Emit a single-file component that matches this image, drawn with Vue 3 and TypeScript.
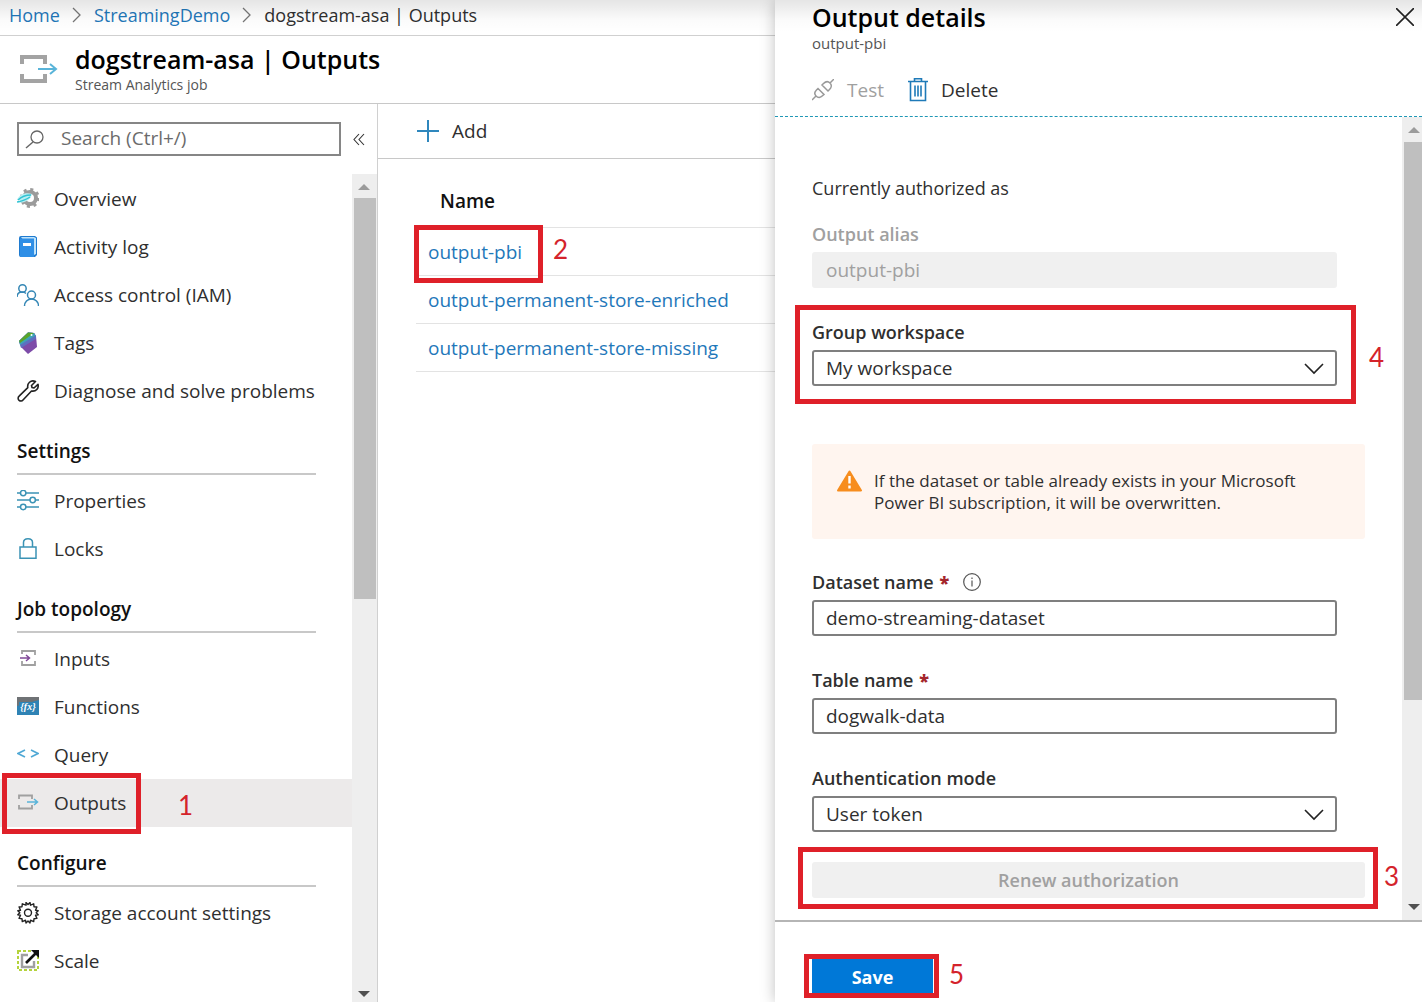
<script setup lang="ts">
import { ref } from 'vue'

interface MenuItem {
  icon: string
  label: string
}
interface MenuGroup {
  title: string
  items: MenuItem[]
}

const groups: MenuGroup[] = [
  {
    title: '',
    items: [
      { icon: 'overview', label: 'Overview' },
      { icon: 'log', label: 'Activity log' },
      { icon: 'people', label: 'Access control (IAM)' },
      { icon: 'tags', label: 'Tags' },
      { icon: 'wrench', label: 'Diagnose and solve problems' },
    ],
  },
  {
    title: 'Settings',
    items: [
      { icon: 'sliders', label: 'Properties' },
      { icon: 'lock', label: 'Locks' },
    ],
  },
  {
    title: 'Job topology',
    items: [
      { icon: 'inputs', label: 'Inputs' },
      { icon: 'functions', label: 'Functions' },
      { icon: 'query', label: 'Query' },
      { icon: 'outputs', label: 'Outputs' },
    ],
  },
  {
    title: 'Configure',
    items: [
      { icon: 'gear', label: 'Storage account settings' },
      { icon: 'scale', label: 'Scale' },
    ],
  },
]

const outputs = ['output-pbi', 'output-permanent-store-enriched', 'output-permanent-store-missing']

const selected = ref('Outputs')
const search = ref('')
const alias = ref('output-pbi')
const workspace = ref('My workspace')
const dataset = ref('demo-streaming-dataset')
const table = ref('dogwalk-data')
const authMode = ref('User token')
</script>

<template>
  <div class="portal">
    <main class="blade">
      <nav class="crumbs" aria-label="Breadcrumb">
        <a href="#">Home</a>
        <svg width="10" height="16" viewBox="0 0 10 16"><path d="M1 1l7 7-7 7" /></svg>
        <a href="#">StreamingDemo</a>
        <svg width="10" height="16" viewBox="0 0 10 16"><path d="M1 1l7 7-7 7" /></svg>
        <span>dogstream-asa | Outputs</span>
      </nav>

      <header class="blade-head">
        <svg width="38" height="30" viewBox="0 0 38 30" fill="none">
          <path d="M2 10V3h23v7M2 20v7h23v-7" stroke="#a3a3a3" stroke-width="4" />
          <path d="M18 15h18M30 10l6 5-6 5" stroke="#59b4d9" stroke-width="2" />
        </svg>
        <div>
          <h1>dogstream-asa | Outputs</h1>
          <p>Stream Analytics job</p>
        </div>
      </header>

      <div class="blade-body">
        <aside class="side">
          <div class="search-row">
            <label class="search">
              <svg width="20" height="20" viewBox="0 0 20 20" fill="none" stroke="#666">
                <circle cx="12" cy="8" r="6" stroke-width="1.3" />
                <path d="M8 13l-7 6" stroke-width="1.5" />
              </svg>
              <input v-model="search" type="text" placeholder="Search (Ctrl+/)" aria-label="Search (Ctrl+/)" />
            </label>
            <button class="collapse" type="button" aria-label="Collapse menu">
              <svg width="14" height="14" viewBox="0 0 14 14" fill="none" stroke="#333" stroke-width="1.1">
                <path d="M7 2L2 7.500l5 5.500M12 2L7 7.500l5 5.500" />
              </svg>
            </button>
          </div>

          <div class="side-body">
            <div class="menu">
              <section v-for="group in groups" :key="group.title">
                <h2 v-if="group.title">{{ group.title }}</h2>
                <ul>
                  <li v-for="item in group.items" :key="item.label" :class="{ active: item.label === selected }">
                    <a href="#" @click.prevent="selected = item.label">
                      <svg width="22" height="22" viewBox="0 0 22 22" fill="none">
                        <g v-if="item.icon === 'overview'">
                          <circle cx="13" cy="10" r="6" stroke="#9b9b9b" stroke-width="4" />
                          <circle cx="13" cy="10" r="8.5" stroke="#9b9b9b" stroke-width="3" stroke-dasharray="3 3.67" />
                          <path d="M0 12c2-5 8-8 15-6-1 6-7 9-15 9 2-1 3-2 3-3z" fill="#b9eef2" />
                          <path d="M1 12c4-4 8-5 13-5M0 14c5-1 9-2 13-5" stroke="#32c3d3" stroke-width="1.4" />
                        </g>
                        <g v-else-if="item.icon === 'log'">
                          <path d="M4 0h14l2 1.500V19l-2 2H4a2 2 0 0 1-2-2V2a2 2 0 0 1 2-2z" fill="#1f7bd0" />
                          <path d="M4 1h13l2 1v16l-2 1z" fill="#bfe3fb" />
                          <path d="M3 2.500h14V21H4l-1-1z" fill="#2f8fe6" />
                          <path d="M6 7h8v3H6z" fill="#fff" />
                        </g>
                        <g v-else-if="item.icon === 'people'" stroke="#3587b5" stroke-width="1.500">
                          <circle cx="5.500" cy="4.500" r="3.700" />
                          <path d="M0 13c0-3 2-5 5.500-5 1.500 0 2.500.5 3.500 1.500" />
                          <circle cx="14.500" cy="11" r="4" />
                          <path d="M7.500 22c0-4 3-7 7-7s7 3 7 7" />
                        </g>
                        <g v-else-if="item.icon === 'tags'">
                          <path d="M2 9l9-8.500 6 .5 2 3 1 11-9 7-7-7z" fill="#7d4ba8" />
                          <path d="M2 9l9-8.500 6 .5 2 3-.2 3L4 16z" fill="#5d6fc0" />
                          <path d="M2 9l9-8.500 6 .5 1.500 2.500L3 13z" fill="#3da3b8" />
                          <path d="M2 9l9-8.500 6 .5L3 11z" fill="#5aa52a" />
                          <circle cx="14.500" cy="3" r="1" fill="#fff" />
                        </g>
                        <g v-else-if="item.icon === 'wrench'" stroke="#222" stroke-width="1.600" stroke-linejoin="round">
                          <path d="M18.500 1.500l-4 4 .5 2 2 .5 4-3.700c1 4-2 7.500-6.500 6.700L6 20c-1 1.200-2.700 1.300-3.900.3-1.300-1.200-1.300-3 0-4.200l8.700-8.500C10 3.500 13.500-.5 18.500 1.500z" />
                        </g>
                        <g v-else-if="item.icon === 'sliders'" stroke="#3b93b5" stroke-width="1.500">
                          <path d="M0 3h3.500M9 3h13M0 10h13M18.500 10H22M0 17h3.500M9 17h13" />
                          <circle cx="6.200" cy="3" r="2.700" />
                          <circle cx="15.700" cy="10" r="2.700" />
                          <circle cx="6.200" cy="17" r="2.700" />
                        </g>
                        <g v-else-if="item.icon === 'lock'" stroke="#3b93b5" stroke-width="1.500">
                          <path d="M3 9h16v11.200H3zM6.500 9V4.500c0-5 9-5 9 0V9" />
                        </g>
                        <g v-else-if="item.icon === 'inputs'">
                          <path d="M5 6V3h13v4M5 13v4h13v-4" stroke="#a0a0a0" stroke-width="1.800" />
                          <path d="M3 10h9M9 7l3.500 3L9 13" stroke="#804998" stroke-width="1.500" />
                        </g>
                        <g v-else-if="item.icon === 'functions'">
                          <path d="M0 1h22v18H0z" fill="#2f83b5" />
                          <path d="M0 1h22v3L0 10z" fill="#6f7275" />
                          <path d="M2 6h18v10H2z" fill="#2f83b5" />
                          <text x="11" y="14" text-anchor="middle" class="fx">{fx}</text>
                        </g>
                        <g v-else-if="item.icon === 'query'" stroke="#4fa8d5" stroke-width="1.600">
                          <path d="M8 6L1 9.500 8 13M14 6l7 3.500-7 3.500" />
                        </g>
                        <g v-else-if="item.icon === 'outputs'">
                          <path d="M2 7V3.500h13V7M2 13v3.500h13V13" stroke="#a0a0a0" stroke-width="1.800" />
                          <path d="M10 10h10M17 7l3.500 3-3.500 3" stroke="#59b4d9" stroke-width="1.500" />
                        </g>
                        <g v-else-if="item.icon === 'gear'" stroke="#222" stroke-width="1.400" stroke-linejoin="round">
                          <path d="M9 3.200L9 .5 11 2.500 13 .5l.5 2.700 3.200-1.400.3 2.900 2.900.3-1.400 3.200 2.700.5-2 2 2 2-2.700.5 1.400 3.200-2.900.3-.3 2.900-3.200-1.400L13 21l-2-2-2 2-.5-2.800-3.200 1.400-.3-2.900-2.900-.3 1.400-3.200L.8 12.700l2-2-2-2 2.700-.5L2.100 5 5 4.700l.3-2.900z" />
                          <circle cx="11" cy="10.700" r="3.500" />
                        </g>
                        <g v-else>
                          <path d="M1 1h20v19H1z" stroke="#b4d33c" stroke-width="2" stroke-dasharray="3 2" />
                          <path d="M11 5H5v12h12v-6" stroke="#a0a0a0" stroke-width="2.400" />
                          <path d="M14 0h8v8z" fill="#111" />
                          <path d="M9 13L19 3" stroke="#111" stroke-width="2.600" />
                        </g>
                      </svg>
                      {{ item.label }}
                    </a>
                    <span v-if="item.label === 'Outputs'" class="mark mark-1" />
                    <span v-if="item.label === 'Outputs'" class="step step-1">1</span>
                  </li>
                </ul>
              </section>
            </div>
            <div class="bar">
              <svg width="24" height="24" viewBox="0 0 24 24"><path d="M6 16h12l-6-6z" fill="#9b9b9b" /></svg>
              <i class="thumb thumb-menu" />
              <i class="track-menu" />
              <svg width="24" height="18" viewBox="0 0 24 18"><path d="M6 7h12l-6 6z" fill="#505050" /></svg>
            </div>
          </div>
        </aside>

        <section class="content">
          <div class="tools">
            <button class="tool" type="button">
              <svg width="22" height="22" viewBox="0 0 22 22"><path d="M0 11h22M11 0v22" stroke="#2f87bd" stroke-width="2" /></svg>
              Add
            </button>
          </div>
          <table class="grid">
            <thead>
              <tr><th scope="col">Name</th></tr>
            </thead>
            <tbody>
              <tr v-for="(name, i) in outputs" :key="name">
                <td>
                  <a href="#">{{ name }}</a>
                  <span v-if="i === 0" class="mark mark-2" />
                  <span v-if="i === 0" class="step step-2">2</span>
                </td>
              </tr>
            </tbody>
          </table>
        </section>
      </div>
    </main>

    <aside class="panel">
      <header class="panel-head">
        <div>
          <h2>Output details</h2>
          <p>output-pbi</p>
        </div>
        <button class="close" type="button" aria-label="Close">
          <svg width="18" height="18" viewBox="0 0 18 18"><path d="M0 0l18 18M18 0L0 18" stroke="#222" stroke-width="1.600" /></svg>
        </button>
      </header>
      <div class="panel-tools">
        <button class="tool" type="button" disabled>
          <svg width="22" height="22" viewBox="0 0 22 22" fill="none" stroke="#999" stroke-width="1.500">
            <path d="M0 21l4-4M18 4l4-4M4 17c-2-2-1.500-4 .5-6L6 9.500l6 6-1.500 1.300c-2 2-4.500 2.200-6.500.2zM18 4c2 2 1.500 4.500-.5 6.500L16 12l-6-6 1.500-1.500c2-2 4.500-2.500 6.500-.5z" />
          </svg>
          Test
        </button>
        <button class="tool" type="button">
          <svg width="20" height="24" viewBox="0 0 20 24" fill="none" stroke="#1e7ab8" stroke-width="1.600">
            <path d="M0 3.500h20M6.500 3.500V.8h7v2.700M2.500 3.500v19h15v-19" />
            <path d="M7 7.500v11M10 7.500v11M13 7.500v11" />
          </svg>
          Delete
        </button>
      </div>

      <div class="panel-body">
        <form id="output-form" class="form" @submit.prevent>
          <p class="authorized">Currently authorized as</p>
          <div class="fields">
            <div class="field muted">
              <label for="alias">Output alias</label>
              <input id="alias" v-model="alias" type="text" disabled />
            </div>
            <div class="field">
              <label for="workspace">Group workspace</label>
              <div class="select">
                <select id="workspace" v-model="workspace"><option>My workspace</option></select>
                <svg width="20" height="12" viewBox="0 0 20 12"><path d="M1 1l9 9 9-9" /></svg>
              </div>
              <span class="mark mark-4" />
              <span class="step step-4">4</span>
            </div>
          </div>

          <div class="warning" role="alert">
            <svg width="25" height="23" viewBox="0 0 25 23">
              <path d="M12.500 1.500L24 20.500H1z" fill="#f78d1e" stroke="#f78d1e" stroke-width="2" stroke-linejoin="round" />
              <path d="M12.500 6v7.500M12.500 15.500v3" stroke="#fff" stroke-width="2.400" />
            </svg>
            <p>If the dataset or table already exists in your Microsoft<br />Power BI subscription, it will be overwritten.</p>
          </div>

          <div class="fields">
            <div class="field">
              <label for="dataset">Dataset name <b>*</b>
                <svg width="18" height="18" viewBox="0 0 18 18" fill="none" stroke="#555">
                  <circle cx="9" cy="9" r="8.300" stroke-width="1.200" />
                  <path d="M9 7.500v6M9 4.500v1.500" stroke-width="1.200" />
                </svg>
              </label>
              <input id="dataset" v-model="dataset" type="text" />
            </div>
            <div class="field">
              <label for="table">Table name <b>*</b></label>
              <input id="table" v-model="table" type="text" />
            </div>
            <div class="field">
              <label for="auth">Authentication mode</label>
              <div class="select">
                <select id="auth" v-model="authMode"><option>User token</option></select>
                <svg width="20" height="12" viewBox="0 0 20 12"><path d="M1 1l9 9 9-9" /></svg>
              </div>
            </div>
          </div>

          <div class="renew">
            <button type="button" disabled>Renew authorization</button>
            <span class="mark mark-3" />
            <span class="step step-3">3</span>
          </div>
        </form>
        <div class="bar bar-panel">
          <svg width="20" height="25" viewBox="0 0 20 25"><path d="M6 16h12l-6-6z" fill="#9b9b9b" /></svg>
          <i class="thumb thumb-panel" />
          <i class="track-panel" />
          <svg width="20" height="24" viewBox="0 0 20 24"><path d="M6 8h12l-6 6z" fill="#505050" /></svg>
        </div>
      </div>

      <footer class="panel-foot">
        <div class="save">
          <button type="submit" form="output-form">Save</button>
          <span class="mark mark-5" />
          <span class="step step-5">5</span>
        </div>
      </footer>
    </aside>
  </div>
</template>

<style>
body {
  margin: 0;
  background: #fff;
}
</style>

<style scoped>
* {
  box-sizing: border-box;
}
.portal {
  position: relative;
  display: flex;
  min-height: 100vh;
  overflow: hidden;
  font: 19px/24px "Open Sans", "Noto Sans", sans-serif;
  color: #2f2f2f;
}
.portal::after {
  content: "";
  position: absolute;
  inset: 0 0 auto;
  height: 32px;
  background: linear-gradient(rgba(0, 0, 0, 0.1), rgba(0, 0, 0, 0.02) 60%, transparent);
  pointer-events: none;
}
h1,
h2,
p,
ul {
  margin: 0;
  padding: 0;
}
ul {
  list-style: none;
}
a {
  color: #1f78ba;
  text-decoration: none;
}
button,
input,
select {
  font: inherit;
  color: inherit;
}
button {
  padding: 0;
  border: 0;
  background: none;
}
svg {
  flex: none;
}

.blade {
  display: flex;
  flex: 1;
  flex-direction: column;
  min-width: 0;
}
.crumbs {
  display: flex;
  align-items: center;
  gap: 12px;
  height: 36px;
  padding: 0 0 6px 9px;
  border-bottom: 1px solid #d0d0d0;
  font-size: 18px;
  white-space: nowrap;
}
.crumbs svg {
  fill: none;
  stroke: #777;
  stroke-width: 1.3;
}
.blade-head {
  display: flex;
  align-items: center;
  gap: 17px;
  height: 68px;
  padding: 0 0 2px 20px;
  border-bottom: 1px solid #c8c8c8;
}
h1,
.panel-head h2 {
  font-size: 25px;
  line-height: 32px;
  font-weight: 600;
  color: #000;
  white-space: nowrap;
}
.blade-head p,
.panel-head p {
  font-size: 14px;
  line-height: 20px;
  color: #555;
}
.blade-body {
  display: flex;
  flex: 1;
}

.side {
  display: flex;
  flex: 0 0 378px;
  flex-direction: column;
  border-right: 1px solid #d0d0d0;
}
.search-row {
  display: flex;
  align-items: center;
  gap: 11px;
  height: 70px;
  padding: 0 11px 0 17px;
}
.search {
  display: flex;
  flex: 1;
  align-items: center;
  gap: 16px;
  height: 34px;
  padding-left: 6px;
  border: 2px solid #868686;
}
.search input {
  flex: 1;
  min-width: 0;
  padding: 0 0 2px;
  border: 0;
  outline: 0;
  background: none;
}
.search input::placeholder {
  color: #6b6b6b;
}
.collapse {
  display: flex;
}
.side-body {
  display: flex;
  flex: 1;
}
.menu {
  flex: 1;
  padding-top: 1px;
}
.menu h2 {
  height: 46px;
  margin: 0 36px 2px 17px;
  padding-top: 10px;
  border-bottom: 2px solid #c8c8c8;
  font-size: 19px;
  font-weight: 600;
  color: #111;
}
.menu section + section {
  padding-top: 14px;
}
.menu li {
  position: relative;
}
.menu li a {
  display: flex;
  align-items: center;
  gap: 15px;
  height: 48px;
  padding-left: 17px;
  color: #2f2f2f;
  white-space: nowrap;
}
.menu .active {
  background: #eceaea;
}
.fx {
  font: italic bold 10px "Liberation Serif", serif;
  fill: #fff;
}

.bar {
  display: flex;
  flex: 0 0 25px;
  flex-direction: column;
  padding-right: 1px;
  background: #eee;
}
.thumb {
  margin-left: 2px;
  background: #bfbfbf;
}
.thumb-menu {
  flex: 51;
}
.track-menu {
  flex: 49;
}
.bar-panel {
  flex-basis: 20px;
  padding: 0;
}
.thumb-panel {
  flex: 74;
}
.track-panel {
  flex: 26;
}

.content {
  flex: 1;
  min-width: 0;
}
.tools {
  display: flex;
  align-items: center;
  height: 55px;
  padding-left: 39px;
  border-bottom: 1px solid #c8c8c8;
}
.tool {
  display: flex;
  align-items: center;
  gap: 13px;
}
.grid {
  width: calc(100% - 38px);
  margin: 19px 0 0 38px;
  border-collapse: collapse;
}
.grid th {
  height: 49px;
  padding: 0 0 3px 24px;
  border-bottom: 1px solid #e3e3e3;
  font-weight: 600;
  text-align: left;
  color: #111;
}
.grid td {
  position: relative;
  height: 48px;
  padding: 2px 0 0 12px;
  border-bottom: 1px solid #e3e3e3;
}

.panel {
  position: relative;
  display: flex;
  flex: 0 0 647px;
  flex-direction: column;
  background: #fff;
  box-shadow: 0 0 14px rgba(0, 0, 0, 0.25);
}
.panel-head {
  display: flex;
  align-items: flex-start;
  justify-content: space-between;
  height: 60px;
  padding: 1px 8px 0 37px;
}
.panel-head p {
  font-size: 15px;
}
.close {
  display: flex;
  padding-top: 7px;
}
.panel-tools {
  display: flex;
  align-items: center;
  gap: 24px;
  height: 57px;
  padding: 3px 0 0 37px;
  border-bottom: 1px dashed #1f97b5;
}
.panel-tools .tool:disabled {
  color: #a0a0a0;
}
.panel-body {
  display: flex;
  flex: 1;
}
.form {
  flex: 1;
  min-width: 0;
  padding: 59px 37px 22px;
}
.authorized {
  margin-bottom: 22px;
  font-size: 18px;
}
.fields {
  display: flex;
  flex-direction: column;
  gap: 32px;
  padding-right: 28px;
}
.field {
  position: relative;
  display: flex;
  flex-direction: column;
  gap: 6px;
}
.field label {
  display: flex;
  align-items: center;
  gap: 6px;
  font-size: 18px;
  font-weight: 600;
}
.field b {
  color: #a4262c;
}
.field label svg {
  margin-left: 8px;
}
.muted,
.renew button {
  color: #a0a0a0;
}
.field input,
.field select {
  width: 100%;
  height: 36px;
  padding: 0 12px 1px;
  border: 2px solid #7f7f7f;
  border-radius: 3px;
  background: #fff;
}
.field input:disabled {
  border-color: #f0f0f0;
  background: #f0f0f0;
}
.select {
  position: relative;
}
.field select {
  display: block;
  appearance: none;
}
.select svg {
  position: absolute;
  top: 13px;
  right: 13px;
  fill: none;
  stroke: #222;
  stroke-width: 1.6;
  pointer-events: none;
}
.warning {
  display: flex;
  gap: 12px;
  margin: 58px 0 31px;
  padding: 26px 0 25px 25px;
  border-radius: 3px;
  background: #fff5ef;
  font-size: 17px;
  line-height: 22px;
}
.renew {
  position: relative;
  margin-top: 30px;
}
.renew button {
  width: 100%;
  height: 36px;
  border-radius: 3px;
  background: #f0f0f0;
  font-size: 18px;
  font-weight: 600;
}
.panel-foot {
  height: 82px;
  padding: 37px 0 0 37px;
  border-top: 2px solid #b5b5b5;
}
.save {
  position: relative;
  width: 121px;
}
.save button {
  width: 100%;
  height: 35px;
  background: #0078d7;
  font-size: 18px;
  font-weight: 700;
  color: #fff;
}

/* Numbered red call-outs drawn over the controls */
.mark {
  position: absolute;
  border: 5px solid #df2029;
  pointer-events: none;
}
.step {
  position: absolute;
  font: 26px/30px Lato, sans-serif;
  color: #d4232b;
}
.mark-1 {
  inset: -6px 211px -7px 2px;
}
.step-1 {
  top: 11px;
  left: 178px;
}
.mark-2 {
  top: -3px;
  left: -2px;
  width: 129px;
  height: 58px;
}
.step-2 {
  top: 6px;
  left: 137px;
}
.mark-3 {
  inset: -15px -13px -11px -14px;
}
.step-3 {
  top: -1px;
  right: -34px;
}
.mark-4 {
  inset: -15px -19px -18px -17px;
}
.step-4 {
  top: 22px;
  right: -47px;
}
.mark-5 {
  inset: -5px -6px -4px -8px;
}
.step-5 {
  top: 0;
  right: -31px;
}
</style>
